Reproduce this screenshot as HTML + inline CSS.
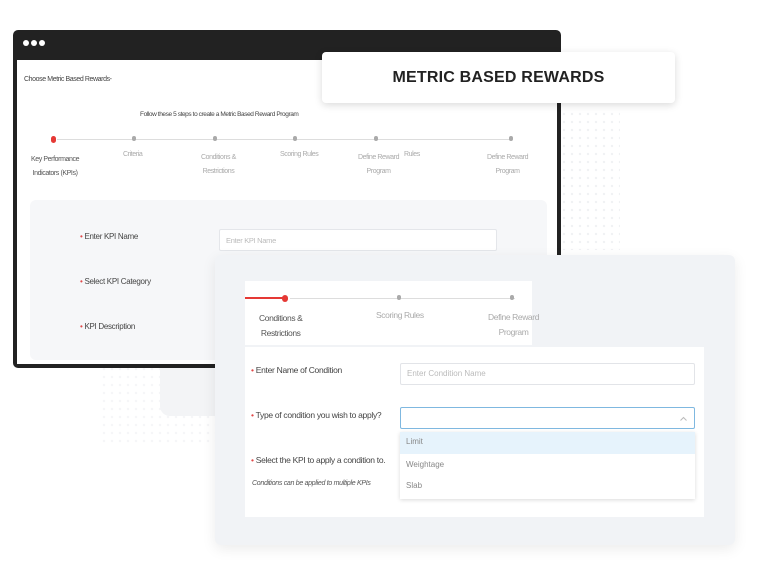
<!DOCTYPE html>
<html><head><meta charset="utf-8">
<style>
*{box-sizing:border-box;margin:0;padding:0}
body{width:764px;height:574px;background:#fff;position:relative;overflow:hidden;font-family:"Liberation Sans",sans-serif}
.abs{position:absolute}
.dots{background-image:radial-gradient(#f0f1f4 1px,transparent 1.4px);background-size:8px 8px}
.win{left:13px;top:30px;width:548px;height:338px;background:#222;border-radius:5px}
.winin{position:absolute;left:4px;top:30px;right:4px;bottom:4px;background:#fff}
.dot{position:absolute;top:10px;width:6px;height:6px;border-radius:50%;background:#fff}
.t{position:absolute;font-size:7px;color:#555;letter-spacing:-0.4px;white-space:nowrap}
.g{color:#aaa;text-align:center}
.line{position:absolute;height:1px;background:#ddd}
.sd{position:absolute;width:4px;height:5px;border-radius:2px;background:#aaa}
.star{color:#e04848}
.lbl{position:absolute;font-size:8px;color:#444;white-space:nowrap;letter-spacing:-0.3px}
</style></head><body>
<div class="abs dots" style="left:560px;top:110px;width:60px;height:140px"></div>
<div class="abs dots" style="left:100px;top:365px;width:120px;height:80px;opacity:.7"></div>
<div class="abs" style="left:160px;top:360px;width:60px;height:56px;background:#f3f4f6;border-radius:0 0 0 10px"></div>

<div class="abs win">
 <div class="dot" style="left:10px"></div><div class="dot" style="left:18px"></div><div class="dot" style="left:26px"></div>
 <div class="winin">
  <div class="t" style="left:7px;top:16px;color:#444">Choose Metric Based Rewards-</div>
  <div class="t" style="left:123px;top:51px;color:#444;font-size:6.5px">Follow these 5 steps to create a Metric Based Reward Program</div>
  <div class="line" style="left:40px;top:79px;width:454px"></div>
  <div class="abs" style="left:34px;top:76px;width:5px;height:7px;border-radius:3px;background:#e53935"></div>
  <div class="sd" style="left:115px;top:76px"></div><div class="sd" style="left:196px;top:76px"></div><div class="sd" style="left:276px;top:76px"></div><div class="sd" style="left:357px;top:76px"></div><div class="sd" style="left:492px;top:76px"></div>
  <div class="t" style="left:14px;top:93px;color:#555;text-align:center;line-height:14px">Key Performance<br>Indicators (KPIs)</div>
  <div class="t g" style="left:106px;top:91px">Criteria</div>
  <div class="t g" style="left:184px;top:91px;line-height:14px">Conditions &amp;<br>Restrictions</div>
  <div class="t g" style="left:263px;top:91px">Scoring Rules</div>
  <div class="t g" style="left:341px;top:91px;line-height:14px">Define Reward<br>Program</div>
  <div class="t g" style="left:387px;top:91px">Rules</div>
  <div class="t g" style="left:470px;top:91px;line-height:14px">Define Reward<br>Program</div>
  <div class="abs" style="left:13px;top:140px;width:517px;height:160px;background:#f6f7f9;border-radius:6px">
   <div class="lbl" style="left:50px;top:32px"><span class="star">•</span> Enter KPI Name</div>
   <div class="lbl" style="left:50px;top:77px"><span class="star">•</span> Select KPI Category</div>
   <div class="lbl" style="left:50px;top:122px"><span class="star">•</span> KPI Description</div>
   <div class="abs" style="left:189px;top:29px;width:278px;height:22px;background:#fff;border:1px solid #e4e6ea;border-radius:2px;font-size:7.5px;color:#bbb;padding:6px 6px;letter-spacing:-0.3px">Enter KPI Name</div>
  </div>
 </div>
</div>

<div class="abs" style="left:322px;top:52px;width:353px;height:51px;background:#fff;border-radius:4px;box-shadow:0 2px 8px rgba(0,0,0,.15);font-size:16px;font-weight:bold;color:#222;text-align:center;line-height:51px;letter-spacing:.2px">METRIC BASED REWARDS</div>

<div class="abs" style="left:215px;top:255px;width:520px;height:290px;background:#f1f3f6;border-radius:6px;box-shadow:0 4px 14px rgba(0,0,0,.08)">
 <div class="abs" style="left:30px;top:26px;width:287px;height:64px;background:#fff">
  <div class="abs" style="left:0;top:16px;width:38px;height:2px;background:#e53935"></div>
  <div class="abs" style="left:37px;top:14px;width:6px;height:7px;border-radius:3px;background:#e53935"></div>
  <div class="line" style="left:45px;top:17px;width:225px"></div>
  <div class="sd" style="left:152px;top:14px"></div><div class="sd" style="left:265px;top:14px"></div>
  <div class="t" style="left:14px;top:30px;font-size:8.5px;color:#555;line-height:15px;text-align:center">Conditions &amp;<br>Restrictions</div>
  <div class="t g" style="left:131px;top:29px;font-size:8.5px">Scoring Rules</div>
  <div class="t g" style="left:243px;top:29px;font-size:8.5px;line-height:15px">Define Reward<br>Program</div>
 </div>
 <div class="abs" style="left:30px;top:92px;width:459px;height:170px;background:#fff">
  <div class="lbl" style="left:6px;top:18px;font-size:8.5px"><span class="star">•</span> Enter Name of Condition</div>
  <div class="lbl" style="left:6px;top:63px;font-size:8.5px"><span class="star">•</span> Type of condition you wish to apply?</div>
  <div class="lbl" style="left:6px;top:108px;font-size:8.5px"><span class="star">•</span> Select the KPI to apply a condition to.</div>
  <div class="lbl" style="left:7px;top:133px;font-size:7px;font-style:italic;color:#555">Conditions can be applied to multiple KPIs</div>
  <div class="abs" style="left:155px;top:16px;width:295px;height:22px;border:1px solid #e2e4e8;border-radius:2px;font-size:8px;color:#bbb;padding:5px 6px">Enter Condition Name</div>
  <div class="abs" style="left:155px;top:60px;width:295px;height:22px;border:1px solid #7fb8e0;border-radius:2px">
   <svg class="abs" style="right:7px;top:8px" width="7" height="5" viewBox="0 0 7 5"><path d="M0.5 4.5L3.5 1.5L6.5 4.5" stroke="#bbb" fill="none"/></svg>
  </div>
  <div class="abs" style="left:155px;top:85px;width:295px;height:67px;background:#fff;box-shadow:0 1px 4px rgba(0,0,0,.15);font-size:8px;color:#888">
   <div style="height:22px;background:#e6f3fc;padding:5px 6px">Limit</div>
   <div style="height:23px;padding:6px 6px">Weightage</div>
   <div style="padding:4px 6px">Slab</div>
  </div>
 </div>
</div>
</body></html>
